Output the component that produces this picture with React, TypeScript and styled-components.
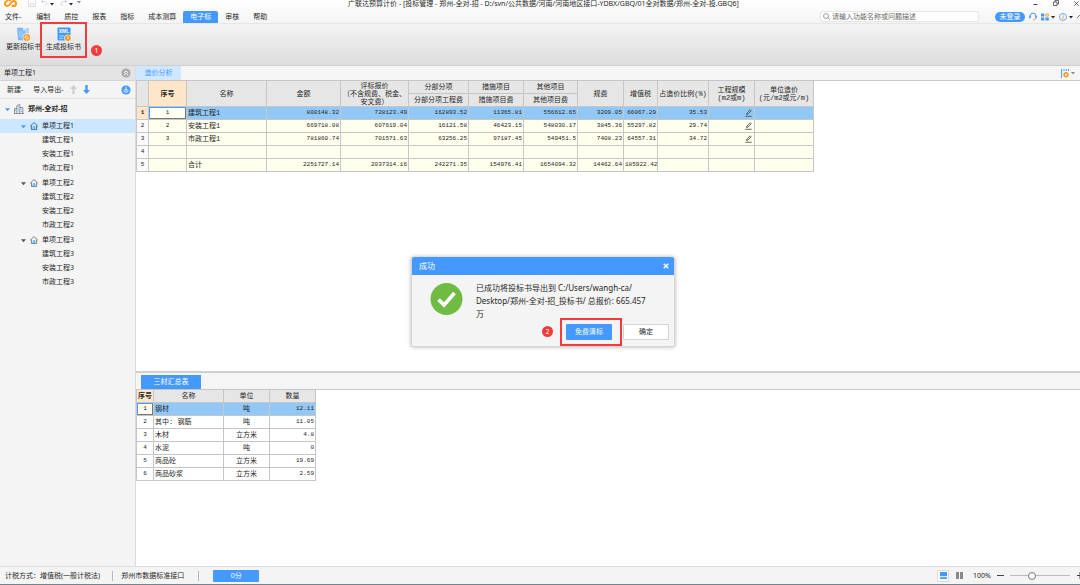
import React from "react";
import styled, { createGlobalStyle, css } from "styled-components";

const BLUE = "#4499ff";
const LINE = "#c6c6c6";
const ANNOTATION = "#f23c3c";
const UI_FONT = `"Noto Sans", "Noto Sans CJK SC", sans-serif`;
const GRID_FONT = `"Liberation Mono", "Noto Sans CJK SC", monospace`;

const GlobalStyle = createGlobalStyle`
  *, *::before, *::after { box-sizing: border-box; }
  body { margin: 0; font-family: ${UI_FONT}; font-size: 7px; line-height: 10px; color: #262626; background: #fff; }
  button, input { font: inherit; color: inherit; }
  button { margin: 0; padding: 0; border: 0; background: none; white-space: nowrap; cursor: pointer; }
  svg { display: block; flex: none; }
  ul { list-style: none; margin: 0; padding: 0; }
`;

const Shell = styled.div`
  position: relative;
  display: flex;
  flex-direction: column;
  min-height: 100vh;
  overflow: hidden;
  border-bottom: 1px solid #76828e;
`;

const TopBar = styled.header`
  background: linear-gradient(#ffffff, #f4f4f4);
  border-bottom: 1px solid #e6e6e6;
`;

const TitleBar = styled.div`
  display: grid;
  grid-template-columns: 1fr auto 1fr;
  height: 10px;
  padding-left: 4px;
  overflow: hidden;
`;

const QuickTools = styled.div`
  display: flex;
  align-items: flex-start;
`;

const IconButton = styled.button`
  display: flex;
  align-items: center;
  justify-content: center;
  gap: 2px;
`;

const SaveButton = styled(IconButton)`
  margin: 0 5px 0 11px;
`;

const WindowTitle = styled.h1`
  margin: 0;
  padding-left: 3px;
  font-size: 7px;
  line-height: 7px;
  font-weight: 400;
  white-space: nowrap;
`;

const WindowButtons = styled.div`
  display: flex;
  justify-content: flex-end;
  gap: 15px;
  padding-right: 1px;
  height: 6px;
`;

const MenuBar = styled.div`
  display: flex;
  align-items: center;
  height: 13px;
`;

const Menus = styled.nav`
  display: flex;
  align-items: flex-end;
  align-self: stretch;
`;

const MenuItem = styled.button<{ $active?: boolean; $first?: boolean }>`
  height: 12px;
  padding: ${(p) => (p.$first ? "0 8px 0 5px" : "0 7px")};
  line-height: 12px;
  ${(p) =>
    p.$active &&
    css`
      background: ${BLUE};
      color: #fff;
      border-radius: 2px 2px 0 0;
    `}
`;

const Search = styled.label`
  display: flex;
  align-items: center;
  gap: 2px;
  width: 159px;
  height: 11px;
  margin-left: auto;
  padding: 0 2px;
  background: #fff;
  border: 1px solid #e6e6e6;
  border-radius: 2px;
`;

const SearchInput = styled.input`
  flex: 1;
  min-width: 0;
  height: 9px;
  padding: 0;
  border: 0;
  outline: 0;
  background: transparent;
  line-height: 9px;
  &::placeholder { color: #666; opacity: 1; }
`;

const Account = styled.div`
  display: flex;
  align-items: center;
  gap: 4px;
  padding-left: 16px;
`;

const LoginButton = styled.button`
  height: 10px;
  width: 30px;
  border-radius: 5px;
  background: ${BLUE};
  color: #fff;
  line-height: 10px;
`;

const Ribbon = styled.div`
  display: flex;
  align-items: flex-start;
  gap: 5px;
  height: 42px;
  padding: 3px 6px;
  background: linear-gradient(#f4f4f4, #dddddd);
  border-bottom: 1px solid #cfcfcf;
`;

const RibbonItem = styled.div`
  position: relative;
`;

const RibbonButton = styled.button`
  display: flex;
  flex-direction: column;
  align-items: center;
  gap: 1px;
  line-height: 8px;
`;

const RedFrame = styled.span<{ $inset: string }>`
  position: absolute;
  inset: ${(p) => p.$inset};
  border: 2px solid ${ANNOTATION};
  pointer-events: none;
`;

const StepBadge = styled.span<{ $left: number; $top: number }>`
  position: absolute;
  left: ${(p) => p.$left}px;
  top: ${(p) => p.$top}px;
  width: 11px;
  height: 11px;
  border-radius: 50%;
  background: ${ANNOTATION};
  color: #fff;
  font-size: 7px;
  line-height: 11px;
  text-align: center;
`;

const Workspace = styled.div`
  display: flex;
  flex: 1;
`;

const Sidebar = styled.aside`
  flex: 0 0 136px;
  background: #f4f4f4;
  border-right: 1px solid #dcdcdc;
`;

const SidebarHead = styled.div`
  display: flex;
  align-items: center;
  justify-content: space-between;
  height: 15px;
  padding: 0 4px;
  background: #e4e4e4;
  border-bottom: 1px solid #d4d4d4;
`;

const SidebarTools = styled.div`
  display: flex;
  align-items: center;
  height: 18px;
  padding: 0 4px 0 7px;
  border-bottom: 1px solid #e2e2e2;
`;

const ToolButton = styled(IconButton)<{ $gap: number }>`
  margin-right: ${(p) => p.$gap}px;
`;

const PushRight = styled(IconButton)`
  margin-left: auto;
`;

const TreeGroup = styled.li`
  margin-bottom: 1px;
`;

const TreeRow = styled.button<{ $level: number; $active?: boolean }>`
  display: flex;
  align-items: center;
  gap: 4px;
  width: 100%;
  height: ${(p) => (p.$level === 0 ? 20 : 14)}px;
  padding-left: ${(p) => [5, 21, 42][p.$level]}px;
  font-weight: ${(p) => (p.$level === 0 ? 700 : 400)};
  background: ${(p) => (p.$active ? "#cce7ff" : "transparent")};
  text-align: left;
`;

const Main = styled.main`
  display: flex;
  flex: 1;
  flex-direction: column;
  min-width: 0;
`;

const TabStrip = styled.div<{ $size: "top" | "bottom" }>`
  display: flex;
  align-items: ${(p) => (p.$size === "top" ? "center" : "flex-end")};
  justify-content: space-between;
  height: ${(p) => (p.$size === "top" ? 15 : 17)}px;
  padding: ${(p) => (p.$size === "top" ? "0 5px 0 0" : "0 0 0 5px")};
  background: #f5f5f5;
  border-bottom: 1px solid ${LINE};
`;

const Tab = styled.button<{ $solid?: boolean }>`
  height: 14px;
  width: ${(p) => (p.$solid ? 60 : 45)}px;
  line-height: 14px;
  color: ${(p) => (p.$solid ? "#fff" : BLUE)};
  background: ${(p) => (p.$solid ? BLUE : "#cfe8ff")};
`;

const UpperPane = styled.section`
  flex: 1;
  background: #fff;
`;

const LowerPane = styled.section`
  min-height: 195px;
  border-top: 2px solid #d0d0d0;
`;

const Grid = styled.table<{ $width: number }>`
  width: ${(p) => p.$width}px;
  table-layout: fixed;
  border-collapse: separate;
  border-spacing: 0;
  border-left: 1px solid ${LINE};
  font-family: ${GRID_FONT};
`;

const Col = styled.col<{ $w: number }>`
  width: ${(p) => p.$w}px;
`;

const HeadRow = styled.tr`
  height: 13px;
`;

const Row = styled.tr<{ $selected?: boolean; $cream?: boolean }>`
  height: 13px;
  background: ${(p) => (p.$selected ? "#91c8f8" : p.$cream ? "#ffffee" : "#fff")};
`;

const cellBase = css`
  padding: 0;
  border-right: 1px solid ${LINE};
  border-bottom: 1px solid ${LINE};
  white-space: nowrap;
  overflow: hidden;
  font-weight: 400;
`;

const Head = styled.th<{ $accent?: boolean }>`
  ${cellBase}
  font-size: 7px;
  line-height: 8px;
  text-align: center;
  background: ${(p) => (p.$accent ? "#ffe6c8" : "#e6e6e6")};
  font-weight: ${(p) => (p.$accent ? 700 : 400)};
`;

const RowNumber = styled.th<{ $accent?: boolean }>`
  ${cellBase}
  font-size: 6px;
  line-height: 8px;
  text-align: center;
  background: ${(p) => (p.$accent ? "#ffe6c8" : "#fafafa")};
  font-weight: ${(p) => (p.$accent ? 700 : 400)};
`;

const Cell = styled.td<{ $align?: "left" | "center" | "right"; $focus?: boolean }>`
  ${cellBase}
  padding: 0 1px;
  font-size: ${(p) => (p.$align === "right" ? 6 : 7)}px;
  line-height: 8px;
  text-align: ${(p) => p.$align ?? "left"};
  ${(p) =>
    p.$focus &&
    css`
      background: #fffff2;
      box-shadow: inset 0 1px ${BLUE}, inset 1px 0 ${BLUE}, inset -1px -1px #777;
    `}
`;

const IndexCell = styled(Cell)`
  font-size: 6px;
`;

const EditButton = styled(IconButton)`
  margin: 0 1px 0 auto;
`;

const StatusBar = styled.footer`
  display: flex;
  align-items: center;
  height: 18px;
  padding-left: 5px;
  background: #f4f4f4;
  border-top: 1px solid #dedede;
  white-space: nowrap;
`;

const Divider = styled.span<{ $space: string }>`
  width: 1px;
  height: 10px;
  margin: ${(p) => p.$space};
  background: #b4bcc4;
`;

const ScoreButton = styled.button`
  width: 46px;
  height: 12px;
  border-radius: 1px;
  background: ${BLUE};
  color: #fff;
  line-height: 12px;
`;

const ViewTools = styled.div`
  display: flex;
  align-items: center;
  margin-left: auto;
`;

const ViewButton = styled(IconButton)<{ $active?: boolean }>`
  width: 12px;
  height: 12px;
  margin-right: 4px;
  border: 1px solid ${(p) => (p.$active ? "#dcdcdc" : "transparent")};
  background: ${(p) => (p.$active ? "#fff" : "transparent")};
`;

const ZoomValue = styled.output`
  width: 24px;
  margin-left: 4px;
`;

const ZoomSlider = styled.input`
  appearance: none;
  width: 60px;
  height: 8px;
  margin: 0 6px;
  background: linear-gradient(#bbb, #bbb) center / 100% 1px no-repeat;
  &::-webkit-slider-thumb {
    appearance: none;
    width: 8px;
    height: 8px;
    border: 1px solid #777;
    border-radius: 50%;
    background: #fff;
  }
`;

const Dialog = styled.div`
  position: absolute;
  left: calc(50% - 129px);
  top: 257px;
  width: 264px;
  background: #f4f4f4;
  border: 1px solid #d4d4d4;
  border-top: 0;
  border-radius: 2px;
  box-shadow: 0 0 4px rgba(0, 0, 0, 0.3);
`;

const DialogHead = styled.div`
  display: flex;
  align-items: center;
  justify-content: space-between;
  height: 18px;
  padding: 0 5px 0 7px;
  background: ${BLUE};
  color: #fff;
  border-radius: 2px 2px 0 0;
`;

const DialogTitle = styled.h2`
  margin: 0;
  font-size: 8px;
  font-weight: 400;
`;

const DialogBody = styled.div`
  display: flex;
  gap: 13px;
  padding: 6px 20px 0 18px;
`;

const Message = styled.p`
  margin: 0;
  font-size: 8px;
  line-height: 13px;
`;

const DialogActions = styled.div`
  display: flex;
  justify-content: flex-end;
  gap: 11px;
  padding: 4px 5px 6px;
`;

const ActionWrap = styled.div`
  position: relative;
`;

const ActionButton = styled.button<{ $primary?: boolean }>`
  width: 46px;
  height: 16px;
  border: 1px solid ${(p) => (p.$primary ? BLUE : "#d2d2d2")};
  border-radius: 1px;
  background: ${(p) => (p.$primary ? BLUE : "#fff")};
  color: ${(p) => (p.$primary ? "#fff" : "#262626")};
`;

const Caret = ({ color = "#222", size = 4 }: { color?: string; size?: number }) => (
  <svg width={size} height={size} viewBox="0 0 4 4">
    <path d="M0 1h4L2 3.4z" fill={color} />
  </svg>
);

const Logo = () => (
  <svg width="13" height="8" viewBox="0 0 13 8" fill="none" stroke="#ff9a1f" strokeWidth="2">
    <path d="M3.400 6C1.800 6 1 5 1 3.800 1 2.500 2 1.600 3.200 1.600M2.600 1.200C3.200-.4 5.600-.6 6.600.8" />
    <path d="M3.200 6C7.200 6 6 1 9.500 1 11.200 1 12 2.200 12 3.400 12 5 11 6 9.500 6 8.700 6 8.200 5.800 7.700 5.300" />
  </svg>
);

const SaveIcon = () => (
  <svg width="8" height="7" viewBox="0 0 8 7" fill="none" stroke="#dcdcdc">
    <path d="M.5-1v7.500h7V-1M2.500 6.500v-3h3v3" />
  </svg>
);

const UndoIcon = ({ flip = false }: { flip?: boolean }) => (
  <svg width="7" height="7" viewBox="0 0 7 7" fill="none" stroke="#d4d4d4">
    <path d={flip ? "M6.500 1.500H3C.5 1.500.5 5.500 3 5.500M5 0l1.500 1.500L5 3" : "M.5 1.500H4c2.500 0 2.500 4 0 4M2 0L.5 1.500 2 3"} />
  </svg>
);

const BuildingIcon = () => (
  <svg width="10" height="10" viewBox="0 0 10 10" fill="none" stroke="#707a84" strokeWidth=".8">
    <path d="M.5 9.500V4.500h2.300M2.800 9.500v-8L5.800.500v9M5.800 3.500h3v6M0 9.500h10" />
    <path d="M4.300 2.500v1M4.300 4.500v1M4.300 6.500v1M7.300 5v1M7.300 7v1M1.700 6v1" stroke={BLUE} />
  </svg>
);

const HouseIcon = ({ active }: { active?: boolean }) => (
  <svg width="8" height="8" viewBox="0 0 8 8" fill="none" stroke={active ? "#36658f" : "#6b7681"} strokeWidth=".9">
    <path d="M.2 4.200L4 .6l3.800 3.600M1.400 3.500v4h5.200v-4" />
    <path d="M3 7.300V4.600h2v2.700z" fill="#8ec2ff" stroke={BLUE} strokeWidth=".5" />
  </svg>
);

const ArrowIcon = ({ up }: { up?: boolean }) => (
  <svg width="7" height="9" viewBox="0 0 7 9" fill={up ? "#cfcfcf" : BLUE}>
    <path d={up ? "M3.500 0L7 4H4.700v5H2.300V4H0z" : "M3.500 9L7 5H4.700V0H2.300v5H0z"} />
  </svg>
);

const PencilIcon = () => (
  <svg width="7" height="8" viewBox="0 0 7 8" fill="none" stroke="#444" strokeWidth=".8">
    <path d="M.3 7.300h6.400M1.500 5.500l.4-1.500L5.200.8l1 1L3 5z" />
  </svg>
);

const UpdateDocIcon = () => (
  <svg width="14" height="15" viewBox="0 0 14 15">
    <path d="M0 .8h6L8.500 3.300v10H1z" fill="#7db9ff" />
    <path d="M6 .8v2.500h2.500z" fill="#d8ecff" />
    <path d="M2 5h4M2 7h4M2 9h3" stroke="#b8dbff" strokeWidth=".8" />
    <path d="M8.500 1.200H12v6H8.500z" fill="#a9d2ff" />
    <circle cx="9.700" cy="10.400" r="4.100" fill="#f1f1f1" />
    <circle cx="9.700" cy="10.400" r="2.800" fill="#ffe3ba" stroke="#ff9a1f" strokeWidth="1.300" />
    <path d="M7.700 12.400l4-4" stroke="#ff9a1f" strokeWidth="1.100" />
  </svg>
);

const XmlDocIcon = () => (
  <svg width="14" height="15" viewBox="0 0 14 15">
    <rect x=".5" y=".5" width="13" height="13" rx="1" fill="#3f97ff" />
    <text x="7" y="6" fill="#fff" fontFamily="Liberation Sans" fontWeight="700" fontSize="5" textAnchor="middle">XML</text>
    <path d="M2.200 9H7M2.200 11.300h4" stroke="#bfe0ff" />
    <circle cx="10.800" cy="11" r="3.600" fill="#fff" />
    <circle cx="10.800" cy="11" r="3" fill="#ff9a1f" />
    <path d="M10.600 9.300V11.200h1.500" fill="none" stroke="#fff" strokeWidth=".8" />
  </svg>
);

const HeadsetIcon = () => (
  <svg width="8" height="9" viewBox="0 0 8 9" fill="none" stroke={BLUE}>
    <path d="M1.200 5V4a2.800 2.900 0 0 1 5.600 0v1" />
    <path d="M1 3.800v2.400M7 3.800v2.400" strokeWidth="1.600" />
    <path d="M6.800 6.200Q6.300 8 4 8" stroke="#ff9a1f" />
  </svg>
);

const AppsIcon = () => (
  <svg width="8" height="8" viewBox="0 0 8 8" fill={BLUE}>
    <path d="M0 .5h3.300v3H0zM0 4.500h3.300v3H0zM4.500 4.500h3.300v3H4.500z" />
    <path d="M4.900.9h2.500v2.200H4.900z" fill="none" stroke="#ff9a1f" strokeWidth=".9" />
  </svg>
);

const InfoIcon = () => (
  <svg width="8" height="8" viewBox="0 0 8 8" fill="none">
    <circle cx="4" cy="4" r="3.500" stroke={BLUE} strokeWidth=".8" />
    <path d="M4.300 1.600v1M4.200 3.300L3.800 6.200" stroke="#ff9a1f" />
  </svg>
);

const SettingsIcon = () => (
  <svg width="8" height="9" viewBox="0 0 8 9" fill="none">
    <path d="M.6 0v9M3 0v2M5.300 0v2M7.500 0v2" stroke={BLUE} strokeWidth="1" />
    <circle cx="5" cy="5.800" r="1.900" stroke="#ff9a1f" strokeWidth="1.600" />
  </svg>
);

const RoundIcon = ({ kind }: { kind: "collapse" | "locate" }) => (
  <svg width="10" height="10" viewBox="0 0 10 10" fill="none" stroke="#fff" strokeWidth=".9">
    <circle cx="5" cy="5" r="4.600" fill={kind === "collapse" ? "#ababab" : BLUE} stroke="none" />
    {kind === "collapse" ? (
      <path d="M3 4.800l2-1.800 2 1.800M3 7.200l2-1.800 2 1.800" />
    ) : (
      <path d="M5 1.800v3.600M3.500 4L5 5.500 6.500 4M2.700 5.300q0 2 2.300 2t2.300-2" />
    )}
  </svg>
);

type CostRow = { index?: string; name?: string; values: string[]; editable?: boolean };

const costColumns = [12, 38, 80, 74, 68, 60, 55, 54, 46, 34, 51, 46, 59];

const costRows: CostRow[] = [
  { index: "1", name: "建筑工程1", editable: true, values: ["800148.32", "728123.49", "162893.52", "11365.81", "556612.65", "3209.05", "66067.29", "35.53"] },
  { index: "2", name: "安装工程1", editable: true, values: ["669718.08", "607619.04", "16121.58", "46423.15", "548030.17", "3845.36", "55297.82", "29.74"] },
  { index: "3", name: "市政工程1", editable: true, values: ["781860.74", "701571.63", "63256.25", "97187.45", "549451.5", "7408.23", "64557.31", "34.72"] },
  { values: ["", "", "", "", "", "", "", ""] },
  { name: "合计", values: ["2251727.14", "2037314.16", "242271.35", "154976.41", "1654094.32", "14462.64", "185922.42", ""] },
];

const materials = [
  ["钢材", "吨", "12.11"],
  ["其中: 钢筋", "吨", "11.05"],
  ["木材", "立方米", "4.8"],
  ["水泥", "吨", "0"],
  ["商品砼", "立方米", "19.69"],
  ["商品砂浆", "立方米", "2.59"],
];

const menus = ["编制", "质控", "报表", "指标", "成本测算", "电子标", "审核", "帮助"];

function Header() {
  return (
    <TopBar>
      <TitleBar>
        <QuickTools>
          <Logo />
          <SaveButton aria-label="保存"><SaveIcon /></SaveButton>
          <ToolButton $gap={6} aria-label="撤销"><UndoIcon /><Caret /></ToolButton>
          <ToolButton $gap={4} aria-label="恢复"><UndoIcon flip /><Caret /></ToolButton>
          <IconButton aria-label="更多"><Caret color="#888" /></IconButton>
        </QuickTools>
        <WindowTitle>广联达预算计价 - [投标管理 - 郑州-全对-招 - D:/svn/公共数据/河南/河南地区接口-YDBX/GBQ/01全对数据/郑州-全对-投.GBQ6]</WindowTitle>
        <WindowButtons>
          <IconButton aria-label="最小化"><svg width="5" height="5" viewBox="0 0 5 5"><path d="M.5 3.500h4" stroke="#444" /></svg></IconButton>
          <IconButton aria-label="还原"><svg width="6" height="6" viewBox="0 0 6 6" fill="none" stroke="#444" strokeWidth=".8"><path d="M.5 2h3.500v3.500H.5zM2 2V.5h3.500V4H4" /></svg></IconButton>
          <IconButton aria-label="关闭"><svg width="5" height="5" viewBox="0 0 5 5" stroke="#444" strokeWidth=".8"><path d="M.3.300l4.400 4.400M4.700.300L.3 4.700" /></svg></IconButton>
        </WindowButtons>
      </TitleBar>
      <MenuBar>
        <Menus>
          <MenuItem $first>文件-</MenuItem>
          {menus.map((m) => (
            <MenuItem key={m} $active={m === "电子标"}>{m}</MenuItem>
          ))}
        </Menus>
        <Search>
          <svg width="7" height="7" viewBox="0 0 7 7" fill="none" stroke="#888" strokeWidth=".8">
            <circle cx="3" cy="3" r="2.500" /><path d="M5 5l1.800 1.800" />
          </svg>
          <SearchInput type="search" aria-label="搜索" placeholder="请输入功能名称或问题描述" />
        </Search>
        <Account>
          <LoginButton>未登录</LoginButton>
          <IconButton aria-label="客服"><HeadsetIcon /></IconButton>
          <IconButton aria-label="应用"><AppsIcon /><Caret /></IconButton>
          <IconButton aria-label="信息"><InfoIcon /><Caret /></IconButton>
          <IconButton aria-label="收起功能区"><svg width="3" height="5" viewBox="0 0 3 5" fill="none" stroke="#555" strokeWidth=".8"><path d="M0 4l3-3" /></svg></IconButton>
        </Account>
      </MenuBar>
    </TopBar>
  );
}

function ProjectTree() {
  return (
    <Sidebar>
      <SidebarHead>
        单项工程1
        <IconButton aria-label="收起"><RoundIcon kind="collapse" /></IconButton>
      </SidebarHead>
      <SidebarTools>
        <ToolButton $gap={10}>新建-</ToolButton>
        <ToolButton $gap={6}>导入导出-</ToolButton>
        <ToolButton $gap={6} aria-label="上移"><ArrowIcon up /></ToolButton>
        <ToolButton $gap={0} aria-label="下移"><ArrowIcon /></ToolButton>
        <PushRight aria-label="定位"><RoundIcon kind="locate" /></PushRight>
      </SidebarTools>
      <ul>
        <li>
          <TreeRow $level={0}><Caret color={BLUE} size={5} /><BuildingIcon />郑州-全对-招</TreeRow>
          <ul>
            {[1, 2, 3].map((n) => (
              <TreeGroup key={n}>
                <TreeRow $level={1} $active={n === 1}>
                  <Caret color={n === 1 ? BLUE : "#555"} size={5} />
                  <HouseIcon active={n === 1} />
                  {`单项工程${n}`}
                </TreeRow>
                <ul>
                  {["建筑工程", "安装工程", "市政工程"].map((name) => (
                    <li key={name}><TreeRow $level={2}>{`${name}${n}`}</TreeRow></li>
                  ))}
                </ul>
              </TreeGroup>
            ))}
          </ul>
        </li>
      </ul>
    </Sidebar>
  );
}

function CostTable() {
  return (
    <Grid $width={678}>
      <colgroup>{costColumns.map((w, i) => <Col key={i} $w={w} />)}</colgroup>
      <thead>
        <HeadRow>
          <Head rowSpan={2} />
          <Head rowSpan={2} $accent>序号</Head>
          <Head rowSpan={2}>名称</Head>
          <Head rowSpan={2}>金额</Head>
          <Head rowSpan={2}>评标报价<br />（不含规费、税金、<br />安文费）</Head>
          <Head>分部分项</Head>
          <Head>措施项目</Head>
          <Head>其他项目</Head>
          <Head rowSpan={2}>规费</Head>
          <Head rowSpan={2}>增值税</Head>
          <Head rowSpan={2}>占造价比例(%)</Head>
          <Head rowSpan={2}>工程规模<br />(m2或m)</Head>
          <Head rowSpan={2}>单位造价<br />(元/m2或元/m)</Head>
        </HeadRow>
        <HeadRow>
          <Head>分部分项工程费</Head>
          <Head>措施项目费</Head>
          <Head>其他项目费</Head>
        </HeadRow>
      </thead>
      <tbody>
        {costRows.map((row, i) => (
          <Row key={i} $cream $selected={i === 0}>
            <RowNumber scope="row" $accent={i === 0}>{i + 1}</RowNumber>
            <IndexCell $align="center" $focus={i === 0}>{row.index}</IndexCell>
            <Cell>{row.name}</Cell>
            {row.values.map((v, j) => <Cell key={j} $align="right">{v}</Cell>)}
            <Cell>{row.editable && <EditButton aria-label="编辑"><PencilIcon /></EditButton>}</Cell>
            <Cell />
          </Row>
        ))}
      </tbody>
    </Grid>
  );
}

function MaterialTable() {
  return (
    <Grid $width={180}>
      <colgroup>{[17, 70, 46, 46].map((w, i) => <Col key={i} $w={w} />)}</colgroup>
      <thead>
        <HeadRow>
          <Head $accent>序号</Head>
          <Head>名称</Head>
          <Head>单位</Head>
          <Head>数量</Head>
        </HeadRow>
      </thead>
      <tbody>
        {materials.map(([name, unit, amount], i) => (
          <Row key={name} $selected={i === 0}>
            <IndexCell $align="center" $focus={i === 0}>{i + 1}</IndexCell>
            <Cell>{name}</Cell>
            <Cell $align="center">{unit}</Cell>
            <Cell $align="right">{amount}</Cell>
          </Row>
        ))}
      </tbody>
    </Grid>
  );
}

function SuccessDialog() {
  return (
    <Dialog role="dialog" aria-labelledby="dialog-title">
      <DialogHead>
        <DialogTitle id="dialog-title">成功</DialogTitle>
        <IconButton aria-label="关闭">
          <svg width="6" height="6" viewBox="0 0 6 6" stroke="#fff" strokeWidth="1.400"><path d="M.7.700l4.600 4.600M5.300.700L.7 5.300" /></svg>
        </IconButton>
      </DialogHead>
      <DialogBody>
        <svg width="33" height="36" viewBox="0 0 33 36" fill="none">
          <circle cx="16.500" cy="18" r="16" fill="#70bb44" />
          <path d="M8.500 18.500l5.500 5.500L24.500 12" stroke="#fff" strokeWidth="3.600" />
        </svg>
        <Message>已成功将投标书导出到 C:/Users/wangh-ca/<br />Desktop/郑州-全对-招_投标书/ 总报价: 665.457<br />万</Message>
      </DialogBody>
      <DialogActions>
        <ActionWrap>
          <ActionButton $primary>免费清标</ActionButton>
          <RedFrame $inset="-6px -10px -6px -6px" />
          <StepBadge $left={-24} $top={2}>2</StepBadge>
        </ActionWrap>
        <ActionButton>确定</ActionButton>
      </DialogActions>
    </Dialog>
  );
}

export default function App() {
  return (
    <Shell>
      <GlobalStyle />
      <Header />
      <Ribbon>
        <RibbonItem>
          <RibbonButton><UpdateDocIcon />更新招标书</RibbonButton>
        </RibbonItem>
        <RibbonItem>
          <RibbonButton><XmlDocIcon />生成投标书</RibbonButton>
          <RedFrame $inset="-5px -6px -7px -6px" />
          <StepBadge $left={45} $top={18}>1</StepBadge>
        </RibbonItem>
      </Ribbon>
      <Workspace>
        <ProjectTree />
        <Main>
          <UpperPane>
            <TabStrip $size="top">
              <Tab>造价分析</Tab>
              <ToolButton $gap={0} aria-label="表格设置"><SettingsIcon /><Caret color="#888" /></ToolButton>
            </TabStrip>
            <CostTable />
          </UpperPane>
          <LowerPane>
            <TabStrip $size="bottom"><Tab $solid>三材汇总表</Tab></TabStrip>
            <MaterialTable />
          </LowerPane>
        </Main>
      </Workspace>
      <StatusBar>
        计税方式：增值税(一般计税法)
        <Divider $space="0 8px 0 12px" />
        郑州市数据标准接口
        <Divider $space="0 14px" />
        <ScoreButton>0分</ScoreButton>
        <ViewTools>
          <ViewButton $active aria-label="上下视图"><svg width="7" height="7" viewBox="0 0 7 7" fill={BLUE}><path d="M0 0h7v4.300H0zM0 5.300h7V7H0z" /></svg></ViewButton>
          <ViewButton aria-label="左右视图"><svg width="7" height="7" viewBox="0 0 7 7" fill="#888"><path d="M0 0h3v7H0zM4 0h3v7H4z" /></svg></ViewButton>
          <ZoomValue>100%</ZoomValue>
          <IconButton aria-label="缩小"><svg width="7" height="7" viewBox="0 0 7 7"><path d="M0 3.500h7" stroke="#444" /></svg></IconButton>
          <ZoomSlider type="range" aria-label="缩放" min={0} max={100} defaultValue={34} />
          <IconButton aria-label="放大"><svg width="4" height="7" viewBox="0 0 4 7"><path d="M1 3.500h3M4 0v7" stroke="#444" /></svg></IconButton>
        </ViewTools>
      </StatusBar>
      <SuccessDialog />
    </Shell>
  );
}
